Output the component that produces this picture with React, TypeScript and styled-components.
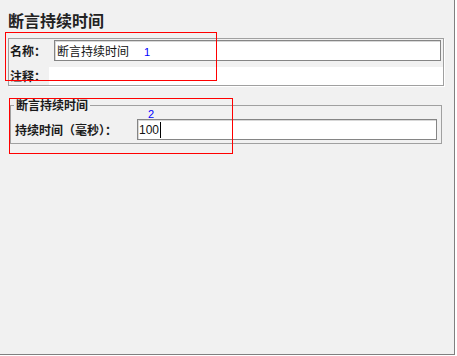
import React from "react";
import styled, { createGlobalStyle } from "styled-components";

const GlobalStyle = createGlobalStyle`
  html, body { margin: 0; padding: 0; background: #ffffff; }
  * { box-sizing: border-box; }
`;

const CJK = `"Noto Sans CJK SC", "Liberation Sans", sans-serif`;

const Frame = styled.div`
  position: relative;
  width: 455px;
  height: 355px;
  background: #f1f1f1;
  border-right: 1px solid #808080;
  border-bottom: 1px solid #808080;
  padding: 10px 0 0 8px;
  font-family: ${CJK};
  color: #111;
`;

const Title = styled.div`
  font-size: 16px;
  line-height: 20px;
  font-weight: 700;
  color: #222;
`;

const InfoPanel = styled.div`
  margin-top: 8px;
  width: 436px;
  height: 48px;
  border: 1px solid #a0a0a0;
  box-shadow: 1px 1px 0 #ffffff;
  display: flex;
  flex-direction: column;
`;

const NameRow = styled.div`
  display: flex;
  align-items: center;
  margin-top: 1px;
  height: 21px;
`;

const CommentRow = styled.div`
  display: flex;
  align-items: flex-end;
  height: 24px;
`;

const Label = styled.div<{ $w: number }>`
  flex: 0 0 ${(p) => p.$w}px;
  padding-left: 1px;
  font-size: 12px;
  line-height: 18px;
  font-weight: 700;
  white-space: nowrap;
  color: #1a1a1a;
`;

const TextBox = styled.div<{ $w: number; $mono?: boolean }>`
  width: ${(p) => p.$w}px;
  height: 21px;
  background: #ffffff;
  border: 1px solid #858585;
  box-shadow: inset 1px 1px 0 #d8d8d8;
  padding-left: ${(p) => (p.$mono ? 1 : 2)}px;
  display: flex;
  align-items: center;
  font-size: 12px;
  font-family: ${(p) => (p.$mono ? `"Liberation Sans", sans-serif` : CJK)};
  color: #111;
  white-space: nowrap;
`;

const Caret = styled.span`
  display: inline-block;
  width: 1px;
  height: 16px;
  background: #000;
  margin-left: 1px;
`;

const CommentArea = styled.div`
  flex: 1;
  height: 18px;
  background: #ffffff;
`;

const Group = styled.fieldset`
  margin: 12px 0 0 2px;
  width: 432px;
  border: 1px solid #a0a0a0;
  padding: 7px 4px 3px 3px;
  min-width: 0;
`;

const Legend = styled.legend`
  padding: 0 2px;
  font-size: 12px;
  line-height: 14px;
  font-weight: 700;
  color: #1a1a1a;
`;

const FieldRow = styled.div`
  display: flex;
  align-items: center;
  height: 21px;
`;

const Mark = styled.div<{ $x: number; $y: number; $w: number; $h: number }>`
  position: absolute;
  left: ${(p) => p.$x}px;
  top: ${(p) => p.$y}px;
  width: ${(p) => p.$w}px;
  height: ${(p) => p.$h}px;
  border: 1px solid #ff0000;
  pointer-events: none;
`;

const Num = styled.div<{ $x: number; $y: number }>`
  position: absolute;
  left: ${(p) => p.$x}px;
  top: ${(p) => p.$y}px;
  font-family: "Liberation Sans", sans-serif;
  font-size: 11px;
  line-height: 12px;
  color: #0000ff;
`;

export default function App() {
  return (
    <>
      <GlobalStyle />
      <Frame>
        <Title>断言持续时间</Title>
        <InfoPanel>
          <NameRow>
            <Label $w={45}>名称：</Label>
            <TextBox $w={387}>断言持续时间</TextBox>
          </NameRow>
          <CommentRow>
            <Label $w={40}>注释：</Label>
            <CommentArea />
          </CommentRow>
        </InfoPanel>
        <Group>
          <Legend>断言持续时间</Legend>
          <FieldRow>
            <Label $w={123}>持续时间（毫秒）：</Label>
            <TextBox $w={300} $mono>
              100
              <Caret />
            </TextBox>
          </FieldRow>
        </Group>
        <Mark $x={5} $y={32} $w={212} $h={49} />
        <Mark $x={9} $y={98} $w={224} $h={56} />
        <Num $x={144} $y={46}>1</Num>
        <Num $x={148} $y={108}>2</Num>
      </Frame>
    </>
  );
}
